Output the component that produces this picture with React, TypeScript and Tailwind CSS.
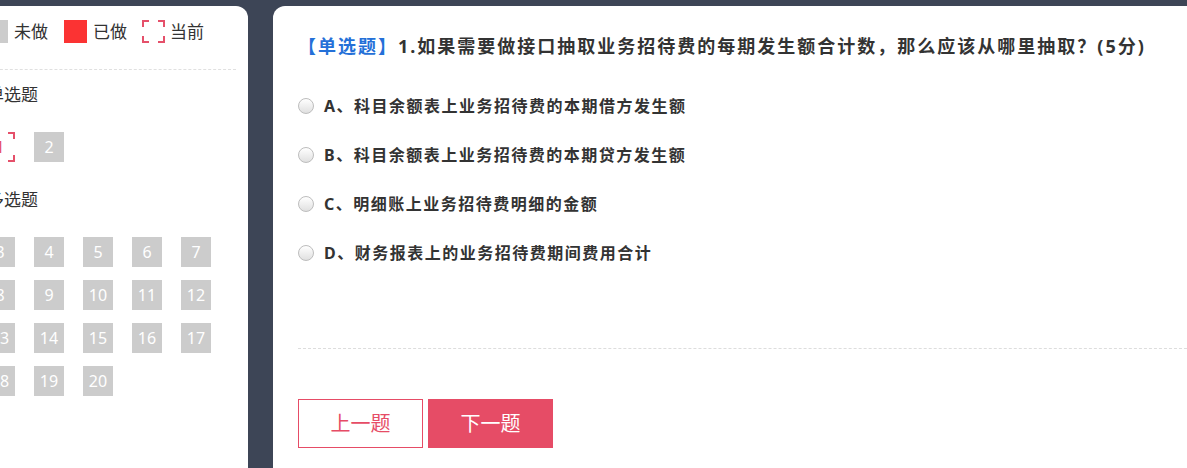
import React from "react";

const FONT = { fontFamily: '"Noto Sans", "Noto Sans CJK SC", sans-serif' };

// corner-bracket frame used for the "current" question
function Corners({ size }: { size: number }) {
  const l = 6;
  const s = size;
  return (
    <svg width={s} height={s} viewBox={`0 0 ${s} ${s}`} className="absolute inset-0">
      <g stroke="#e5506a" strokeWidth="2" fill="none">
        <path d={`M1 ${l + 1} V1 H${l + 1}`} />
        <path d={`M${s - l - 1} 1 H${s - 1} V${l + 1}`} />
        <path d={`M1 ${s - l - 1} V${s - 1} H${l + 1}`} />
        <path d={`M${s - l - 1} ${s - 1} H${s - 1} V${s - l - 1}`} />
      </g>
    </svg>
  );
}

function NumBox({ n, current }: { n: number; current?: boolean }) {
  if (current) {
    return (
      <div className="relative w-[30px] h-[30px] flex items-center justify-center text-[16px] text-[#e5506a]">
        <Corners size={30} />
        {n}
      </div>
    );
  }
  return (
    <div className="w-[30px] h-[30px] flex items-center justify-center bg-[#cccccc] text-[16px] text-white">
      {n}
    </div>
  );
}

function Radio() {
  return (
    <span className="w-[16px] h-[16px] shrink-0 rounded-full border border-[#bdbdbd] bg-gradient-to-b from-[#ffffff] to-[#e0e0e0]" />
  );
}

const options = [
  "A、科目余额表上业务招待费的本期借方发生额",
  "B、科目余额表上业务招待费的本期贷方发生额",
  "C、明细账上业务招待费明细的金额",
  "D、财务报表上的业务招待费期间费用合计",
];

export default function App() {
  const multi = Array.from({ length: 18 }, (_, i) => i + 3);
  return (
    <div
      className="w-[1187px] h-[468px] overflow-hidden bg-[#3d4556] flex gap-[25px] pt-[6px]"
      style={FONT}
    >
      {/* left: answer sheet */}
      <aside className="ml-[-40px] w-[288px] shrink-0 bg-white rounded-tr-[12px] pl-[25px] pr-[12px] text-[#333]">
        <div className="mt-[14px] h-[23px] flex items-center text-[17px]">
          <span className="w-[23px] h-[23px] bg-[#cccccc]" />
          <span className="ml-[6px]">未做</span>
          <span className="ml-[16px] w-[23px] h-[23px] bg-[#fb3333]" />
          <span className="ml-[6px]">已做</span>
          <span className="ml-[15px] relative w-[23px] h-[23px]">
            <Corners size={23} />
          </span>
          <span className="ml-[5px]">当前</span>
        </div>

        <div className="mt-[26px] border-t border-dashed border-[#e0e0e0]" />

        <div className="mt-[13px] ml-[2px] h-[24px] leading-[24px] text-[17px]">单选题</div>
        <div className="mt-[25px] grid grid-cols-5 w-[226px] gap-x-[19px]">
          <NumBox n={1} current />
          <NumBox n={2} />
        </div>

        <div className="mt-[26px] ml-[2px] h-[24px] leading-[24px] text-[17px]">多选题</div>
        <div className="mt-[25px] grid grid-cols-5 w-[226px] gap-x-[19px] gap-y-[13px]">
          {multi.map((n) => (
            <NumBox key={n} n={n} />
          ))}
        </div>
      </aside>

      {/* right: question */}
      <main className="flex-1 mr-[-20px] bg-white rounded-tl-[12px] pl-[25px]">
        <h1 className="mt-[26px] h-[28px] leading-[28px] text-[18px] font-bold tracking-[2px] text-[#333] whitespace-nowrap">
          <span className="text-[#2470d8]">【单选题】</span>1.如果需要做接口抽取业务招待费的每期发生额合计数，那么应该从哪里抽取？(5分)
        </h1>

        <div className="mt-[21px]">
          {options.map((o) => (
            <label key={o} className="h-[49px] flex items-center gap-[10px]">
              <Radio />
              <span className="text-[16px] font-bold tracking-[1.5px] text-[#333]">{o}</span>
            </label>
          ))}
        </div>

        <div className="mt-[71px] border-t border-dashed border-[#dddddd]" />

        <div className="mt-[50px] flex gap-[5px]">
          <button className="w-[125px] h-[49px] border border-[#e64c66] bg-white text-[20px] text-[#e64c66]">
            上一题
          </button>
          <button className="w-[125px] h-[49px] bg-[#e64c66] text-[20px] text-white">
            下一题
          </button>
        </div>
      </main>
    </div>
  );
}
